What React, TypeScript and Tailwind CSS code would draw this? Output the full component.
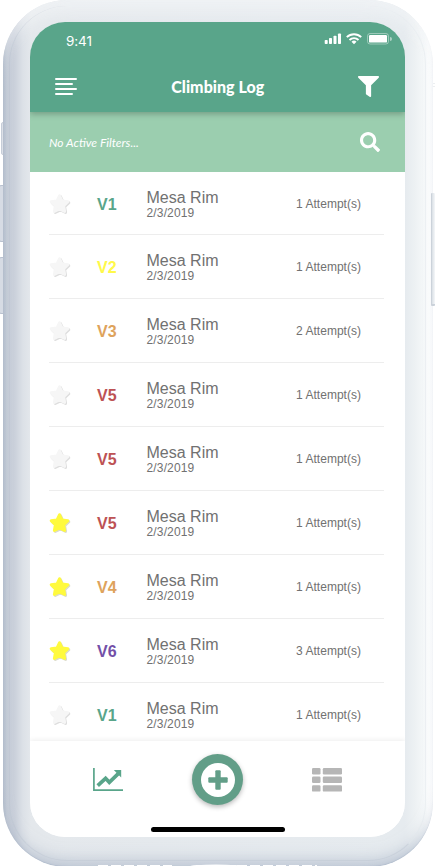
import React from "react";
import { FaFilter, FaSearch } from "react-icons/fa";

type Climb = { grade: string; color: string; attempts: number; starred: boolean };

const climbs: Climb[] = [
  { grade: "V1", color: "text-[#59a58a]", attempts: 1, starred: false },
  { grade: "V2", color: "text-[#fff94a]", attempts: 1, starred: false },
  { grade: "V3", color: "text-[#dea35c]", attempts: 2, starred: false },
  { grade: "V5", color: "text-[#bd5254]", attempts: 1, starred: false },
  { grade: "V5", color: "text-[#bd5254]", attempts: 1, starred: false },
  { grade: "V5", color: "text-[#bd5254]", attempts: 1, starred: true },
  { grade: "V4", color: "text-[#dea35c]", attempts: 1, starred: true },
  { grade: "V6", color: "text-[#7350a8]", attempts: 3, starred: true },
  { grade: "V1", color: "text-[#59a58a]", attempts: 1, starred: false },
];

const starPath =
  "M10.5 2.6 L13 7.9 L18.9 8.7 L14.7 12.8 L15.7 18.6 L10.5 15.9 L5.3 18.6 L6.3 12.8 L2.1 8.7 L8 7.9Z";

function Star({ on }: { on: boolean }) {
  return (
    <svg viewBox="0 0 23 23" className="size-[23px]" strokeWidth="2.8" strokeLinejoin="round">
      <path
        d={starPath}
        transform="translate(1 1)"
        className={on ? "fill-[#dcdccb] stroke-[#dcdccb]" : "fill-[#dedede] stroke-[#dedede]"}
      />
      <path
        d={starPath}
        className={on ? "fill-[#fffa3e] stroke-[#fffa3e]" : "fill-[#f6f6f6] stroke-[#f6f6f6]"}
      />
    </svg>
  );
}

function StatusIcons() {
  return (
    <svg width="68" height="14" viewBox="0 0 68 14" fill="white">
      <rect x="0.7" y="8" width="3" height="4" rx=".8" />
      <rect x="5" y="6" width="3" height="6" rx=".8" />
      <rect x="9.5" y="3.8" width="3" height="8.2" rx=".8" />
      <rect x="14" y="1.5" width="3" height="10.5" rx=".8" />
      <g fill="none" stroke="white" strokeWidth="1.9">
        <path d="M22.8 5.2a10.2 10.2 0 0 1 14.4 0" />
        <path d="M25.5 8a6.4 6.4 0 0 1 9 0" />
      </g>
      <path d="M27.5 9.8a3.6 3.6 0 0 1 5 0L30 12.3Z" />
      <rect x="43.5" y="1.5" width="21" height="10.5" rx="2.6" fill="none" stroke="white" strokeOpacity=".4" />
      <rect x="45" y="3" width="18" height="7.6" rx="1.2" />
      <path d="M66 5v4a2 2 0 0 0 0-4Z" opacity=".5" />
    </svg>
  );
}

function Hardware() {
  return (
    <>
      <div className="absolute left-[1px] top-[122px] h-[33px] w-[5px] rounded-l-[2px] border border-[#c6cdd8] bg-[#dce0e7]" />
      <div className="absolute -left-px top-[185px] h-[57px] w-[6px] rounded-[2px] border border-[#b9c1cf] bg-[#d6dbe4]" />
      <div className="absolute -left-px top-[257px] h-[57px] w-[6px] rounded-[2px] border border-[#b9c1cf] bg-[#d6dbe4]" />
      <div className="absolute left-[425px] top-[83px] h-[4px] w-[10px] border-y border-[#eceff1]" />
      <div className="absolute left-[425px] top-[778px] h-[3px] w-[7px] border-y border-[#e2e6e9]" />
    </>
  );
}

export default function App() {
  return (
    <div className="relative h-[866px] w-[435px] overflow-hidden bg-white font-['Liberation_Sans',sans-serif]">
      <Hardware />
      <div className="relative ml-[3px] h-[867px] w-[430px] overflow-hidden rounded-[64px] bg-[linear-gradient(90deg,#b3bdcb_0px,#c5ccd7_4px,#cbd1db_12px,#dce1e7_20px,#e4e8ec_28px,#e6ebef_402px,#edf1f3_412px,#f5f8f9_421px,#fcfdfd_425px,#ffffff_430px)] pl-[27px] pt-[22px]">
        <div className="absolute inset-0 rounded-[64px] shadow-[inset_0_24px_18px_-12px_rgba(246,248,250,0.6),inset_0_-14px_16px_-8px_rgba(157,170,191,0.6),inset_0_-1px_1px_rgba(170,181,200,0.45)]" />
        <div className="absolute inset-y-[6px] left-[6px] right-[7px] rounded-[58px] border-b border-l border-r border-b-[#c0c8d480] border-l-[#bac3d066] border-r-[#e2e7ec80]" />
        <main className="relative flex h-[815px] w-[375px] flex-col overflow-hidden rounded-[35px] bg-white">
          <header className="relative z-10 h-[90px] shrink-0 bg-[#59a58a] shadow-[0_2px_6px_rgba(0,0,0,0.25)]">
            <div className="flex h-[38px] items-center justify-between pl-[36px] pr-[13px]">
              <span className="pt-px font-['Inter',sans-serif] text-[13.5px] leading-none tracking-[-0.1px] text-white">9:41</span>
              <span className="-mt-1"><StatusIcons /></span>
            </div>
            <div className="flex h-[52px] items-center justify-between pl-[25px] pr-[25.5px]">
              <svg width="22" height="18" viewBox="0 0 22 18" stroke="white" strokeWidth="2" strokeLinecap="round">
                <path d="M1 2h20M1 7h16M1 12h20M1 17h16" />
              </svg>
              <h1 className="pt-0.5 font-['Lato',sans-serif] text-[16px] font-black leading-none tracking-[0.03px] text-white">Climbing Log</h1>
              <FaFilter className="size-[21px] text-white" />
            </div>
          </header>
          <section className="flex h-[60px] shrink-0 items-center justify-between bg-[#9bceaf] pl-[19px] pr-[25px]">
            <span className="pt-px font-['Lato',sans-serif] text-[12px] italic text-white">No Active Filters...</span>
            <FaSearch className="size-5 text-white" />
          </section>
          <ul className="h-[569px] shrink-0 overflow-hidden px-[19px]">
            {climbs.map((c, i) => (
              <li
                key={i}
                className="flex h-16 w-[335px] items-center border-b border-[#ededed] pt-0.5 first:h-[63px] first:pt-[3px]"
              >
                <span className="w-12"><Star on={c.starred} /></span>
                <span className={"w-[49.5px] text-[16px] font-bold leading-none " + c.color}>{c.grade}</span>
                <span className="w-[149.5px] text-[#717171]">
                  <span className="block text-[16px] leading-[17px]">Mesa Rim</span>
                  <span className="block text-[12px] leading-[14px] tracking-[0.15px]">2/3/2019</span>
                </span>
                <span className="pb-[2px] text-[12px] leading-none tracking-[0.03px] text-[#717171]">{c.attempts} Attempt(s)</span>
              </li>
            ))}
          </ul>
          <nav className="relative flex h-[96px] shrink-0 items-start justify-between bg-white px-[63px] pt-[13px] shadow-[0_-1px_5px_rgba(0,0,0,0.07)]">
            <svg width="30" height="24" viewBox="0 0 30 24" className="mt-[14px] text-[#59a58a]" fill="none" stroke="currentColor">
              <path d="M.9 0v22.2h29.1" strokeWidth="1.7" />
              <path d="m4.7 17.7 7.9-7.4 3.7 4 9-8.7" strokeWidth="3.7" />
              <path d="M20.8 2h7.4v7.4Z" fill="currentColor" stroke="none" />
            </svg>
            <button className="flex size-[51px] items-center justify-center rounded-full bg-[#629e88] shadow-[0_2px_5px_rgba(0,0,0,0.28)]">
              <svg width="34" height="34" viewBox="0 0 34 34" fill="#629e88">
                <circle cx="17" cy="17" r="17" fill="white" />
                <rect x="14.3" y="7.3" width="5.4" height="19.4" rx="1" />
                <rect x="7.3" y="14.3" width="19.4" height="5.4" rx="1" />
              </svg>
            </button>
            <svg width="30" height="24" viewBox="0 0 30 24" className="mt-[14px]" fill="#b6b6b6">
              <rect width="8.5" height="6.4" rx="1.2" />
              <rect x="10.8" width="19.2" height="6.4" rx="1.2" />
              <rect y="8.6" width="8.5" height="6.4" rx="1.2" />
              <rect x="10.8" y="8.6" width="19.2" height="6.4" rx="1.2" />
              <rect y="17.2" width="8.5" height="6.4" rx="1.2" />
              <rect x="10.8" y="17.2" width="19.2" height="6.4" rx="1.2" />
            </svg>
            <div className="absolute bottom-[5px] left-[121px] h-[5px] w-[134px] rounded-full bg-black" />
          </nav>
        </main>
      </div>
      <div className="absolute left-[431px] top-[193px] h-[113px] w-[4px] rounded-[1px] border-b-2 border-l border-[#cbd2da] bg-gradient-to-r from-[#d9dfe5] to-[#f5f7f9]" />
      <svg className="absolute bottom-0 left-[97px]" width="240" height="2" viewBox="0 0 240 2" fill="white">
        <ellipse cx="119" cy="2.5" rx="27" ry="2" />
        <path d="M1 1.5h74M140 1.5h80" stroke="white" strokeWidth="1" strokeDasharray="10 3" />
      </svg>
    </div>
  );
}
